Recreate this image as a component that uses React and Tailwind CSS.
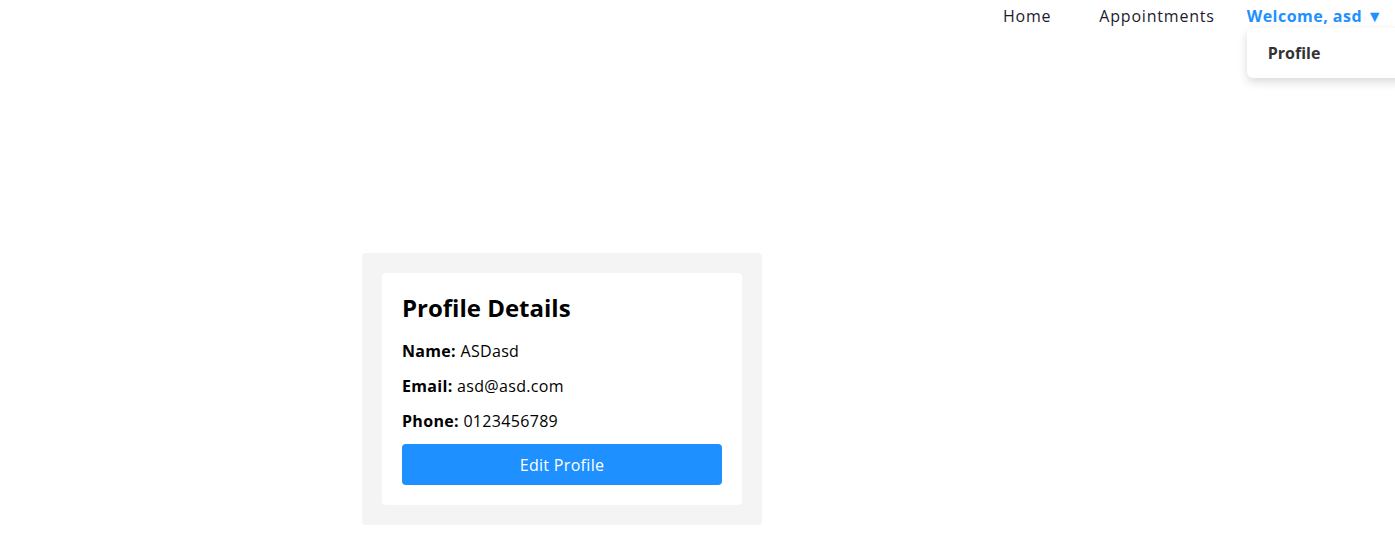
import React from 'react';

const font = { fontFamily: '"Open Sans", "Liberation Sans", sans-serif' };

const Nav = () => {
    return (
        <nav className="h-8 flex items-center justify-end pr-3 text-[16px] text-[#1c1c2e] tracking-[0.05em]">
            <a className="mr-12">Home</a>
            <a className="mr-8">Appointments</a>
            <div className="relative">
                <span className="font-bold text-[#1e90ff] tracking-[0.03em]">Welcome, asd ▼</span>
                <div className="absolute left-0 top-[24px] w-[160px] h-[50px] bg-white rounded-md shadow-[0_4px_10px_rgba(0,0,0,0.15)] flex items-center pl-[21px]">
                    <span className="font-bold text-[#333] tracking-normal">Profile</span>
                </div>
            </div>
        </nav>
    );
};

export default function App() {
    return (
        <div className="min-h-[559px] bg-white overflow-hidden" style={font}>
            <Nav />
            <div className="ml-[362px] mt-[221px] w-[400px] bg-[#f4f4f4] rounded p-5">
                <div className="bg-white rounded p-5 text-black tracking-[0.02em]">
                    <h2 className="text-[24px] font-bold leading-[30px] tracking-normal">Profile Details</h2>
                    <p className="mt-[18px] leading-[20px]"><b>Name:</b> ASDasd</p>
                    <p className="mt-[15px] leading-[20px]"><b>Email:</b> asd@asd.com</p>
                    <p className="mt-[15px] leading-[20px]"><b>Phone:</b> 0123456789</p>
                    <button className="mt-[13px] w-full h-[41px] bg-[#1e90ff] text-white rounded text-[16px]">Edit Profile</button>
                </div>
            </div>
        </div>
    );
}
